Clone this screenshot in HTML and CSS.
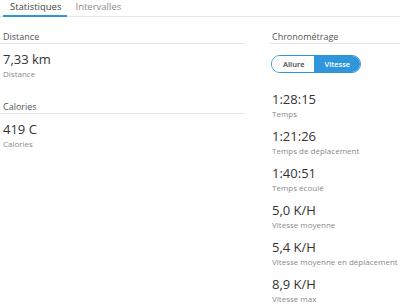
FILE: index.html
```html
<!DOCTYPE html>
<html lang="fr">
<head>
    <meta charset="UTF-8">
    <title>Statistiques</title>
    <link rel="stylesheet" href="styles.css">
</head>
<body>
    <div class="tabs">
        <div class="tab active">Statistiques</div>
        <div class="tab">Intervalles</div>
    </div>

    <div class="stats">
        <div class="column left">
            <div class="section">
                <div class="section-title">Distance</div>
                <div class="stat">
                    <div class="stat-value">7,33 km</div>
                    <div class="stat-label">Distance</div>
                </div>
            </div>

            <div class="section">
                <div class="section-title">Calories</div>
                <div class="stat">
                    <div class="stat-value">419 C</div>
                    <div class="stat-label">Calories</div>
                </div>
            </div>
        </div>

        <div class="column right">
            <div class="section">
                <div class="section-title">Chronométrage</div>
                <div class="toggle">
                    <span class="toggle-btn">Allure</span>
                    <span class="toggle-btn selected">Vitesse</span>
                </div>
                <div class="stat">
                    <div class="stat-value">1:28:15</div>
                    <div class="stat-label">Temps</div>
                </div>
                <div class="stat">
                    <div class="stat-value">1:21:26</div>
                    <div class="stat-label">Temps de déplacement</div>
                </div>
                <div class="stat">
                    <div class="stat-value">1:40:51</div>
                    <div class="stat-label">Temps écoulé</div>
                </div>
                <div class="stat">
                    <div class="stat-value">5,0 K/H</div>
                    <div class="stat-label">Vitesse moyenne</div>
                </div>
                <div class="stat">
                    <div class="stat-value">5,4 K/H</div>
                    <div class="stat-label">Vitesse moyenne en déplacement</div>
                </div>
                <div class="stat">
                    <div class="stat-value">8,9 K/H</div>
                    <div class="stat-label">Vitesse max</div>
                </div>
            </div>
        </div>
    </div>
</body>
</html>
```

FILE: styles.css
```css
:root {
    --primary-color: #2f96dc;
    --line-color: #e6e6e6;
    --text-dark: #333333;
    --text-muted: #8a8a8a;
}

body {
    font-family: 'Open Sans', 'Noto Sans', sans-serif;
    background: #ffffff;
    color: var(--text-dark);
    margin: 0;
    overflow: hidden;
}

.tabs {
    display: flex;
    border-bottom: 1px solid var(--line-color);
    margin-bottom: 14px;
}

.tab {
    font-size: 9.5px;
    line-height: 13px;
    padding: 0 6px 2px 7px;
    margin-left: 3px;
    color: #8c8c8c;
    border-bottom: 2px solid transparent;
    margin-bottom: -1px;
}

.tab + .tab {
    margin-left: 1px;
}

.tab.active {
    color: #444444;
    border-bottom-color: var(--primary-color);
}

.stats {
    display: flex;
    gap: 24px;
}

.column.left {
    width: 245px;
    flex-shrink: 0;
}

.column.right {
    flex: 1;
}

.section {
    margin-bottom: 22px;
}

.section-title {
    font-size: 9px;
    line-height: 12px;
    color: #555555;
    padding-left: 3px;
    border-bottom: 1px solid var(--line-color);
    margin-bottom: 6px;
}

.stat {
    padding-left: 3px;
    margin-bottom: 8px;
}

.stat-value {
    font-size: 13px;
    line-height: 18px;
    color: var(--text-dark);
}

.stat-label {
    font-size: 8px;
    line-height: 11px;
    color: var(--text-muted);
}

.toggle {
    display: inline-flex;
    margin: 0 0 17px 2px;
    border: 1px solid var(--primary-color);
    border-radius: 9px;
    overflow: hidden;
}

.toggle-btn {
    font-size: 7.5px;
    font-weight: 600;
    line-height: 16px;
    padding: 0 10px 0 11px;
    color: #444444;
    background: #ffffff;
}

.toggle-btn.selected {
    background: var(--primary-color);
    color: #ffffff;
    padding: 0 10px;
}
```
